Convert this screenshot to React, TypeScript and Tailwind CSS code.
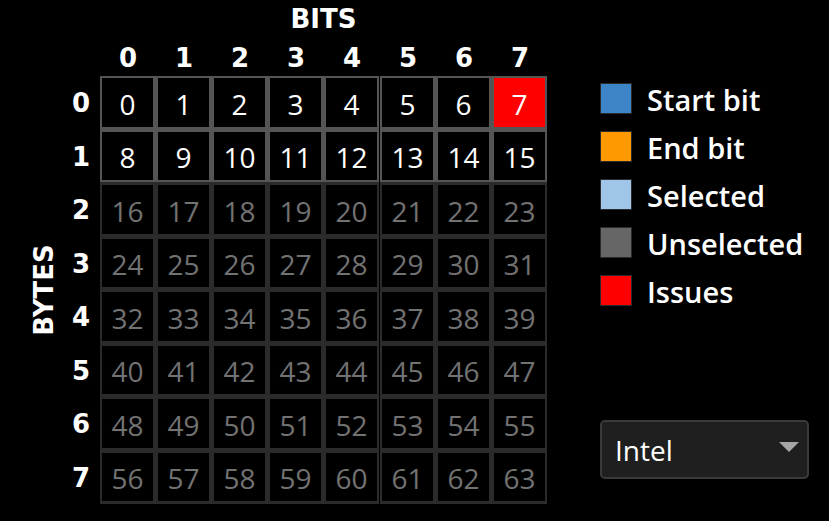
import React from 'react';

const BITS = [0, 1, 2, 3, 4, 5, 6, 7];
const BYTES = [0, 1, 2, 3, 4, 5, 6, 7];

// bytes 0 and 1 hold the signal, bit 7 has an issue
const ACTIVE_BYTES = [0, 1];
const ISSUES = [7];

const LEGEND = [
  { label: 'Start bit', swatch: 'bg-[#3d85c6]' },
  { label: 'End bit', swatch: 'bg-[#ff9900]' },
  { label: 'Selected', swatch: 'bg-[#9fc5e8]' },
  { label: 'Unselected', swatch: 'bg-[#666666]' },
  { label: 'Issues', swatch: 'bg-[#ff0000]' },
];

function Cell({ n, active }: { n: number; active: boolean }) {
  const issue = ISSUES.includes(n);
  return (
    <div
      className={`w-[55px] h-[52.5px] border-2 flex items-center justify-center pt-[3px] text-[28px] leading-none ${
        active ? 'border-[#555555] text-white' : 'border-[#2b2b2b] text-[#727272]'
      } ${issue ? 'bg-[#ff0000]' : 'bg-black'}`}
    >
      {n}
    </div>
  );
}

// one block of columns (the grid is split between bit 4 and bit 5)
function Group({ cols }: { cols: number[] }) {
  const row = (b: number) => (
    <div key={b} className="flex gap-px">
      {cols.map((c) => (
        <Cell key={c} n={b * 8 + c} active={ACTIVE_BYTES.includes(b)} />
      ))}
    </div>
  );
  return (
    <div className="flex flex-col gap-px bg-[#2b2b2b]">
      <div className="flex flex-col gap-px bg-[#555555]">{BYTES.filter((b) => ACTIVE_BYTES.includes(b)).map(row)}</div>
      {BYTES.filter((b) => !ACTIVE_BYTES.includes(b)).map(row)}
    </div>
  );
}

export default function App() {
  const head = "font-['DejaVu_Sans',sans-serif] font-bold text-white text-[26px] leading-none";
  return (
    <div className="w-[829px] h-[521px] bg-black flex font-['Open_Sans',sans-serif] text-white overflow-hidden">
      {/* LEFT — bit matrix */}
      <div className="flex flex-col">
        <div className={`h-[38px] ml-[100px] w-[447px] flex items-center justify-center ${head}`}>BITS</div>
        <div className={`h-[38px] ml-[100px] flex items-center ${head}`}>
          {BITS.map((b) => (
            <div key={b} className="w-[56px] text-center pt-[1px]">{b}</div>
          ))}
        </div>
        <div className="flex">
          <div className="w-[62px] pl-[26px] flex items-center justify-center">
            <div className={`-rotate-90 whitespace-nowrap ${head}`}>BYTES</div>
          </div>
          <div className={`w-[38px] flex flex-col ${head}`}>
            {BYTES.map((b) => (
              <div key={b} className="h-[53.5px] flex items-center justify-center pt-[1px]">{b}</div>
            ))}
          </div>
          <div className="flex gap-px">
            <Group cols={[0, 1, 2, 3, 4]} />
            <Group cols={[5, 6, 7]} />
          </div>
        </div>
      </div>

      {/* RIGHT — legend + byte order */}
      <div className="flex flex-col pl-[52px] pt-[83px] pb-[42px]">
        <div className="flex flex-col gap-[17px]">
          {LEGEND.map((l) => (
            <div key={l.label} className="flex items-center h-[31px]">
              <div className={`w-[32px] h-[31px] border border-[#2a2a2a] ${l.swatch}`} />
              <span className="ml-[15px] text-[29px] font-semibold leading-none pt-[2px]">{l.label}</span>
            </div>
          ))}
        </div>
        <div className="mt-auto w-[209px] h-[59px] rounded-[5px] border-2 border-[#3a3a3a] bg-[#1f1f1f] flex items-center pl-[13px] pr-[8px]">
          <span className="text-[28px] leading-none flex-1">Intel</span>
          <svg width="20" height="10" viewBox="0 0 20 10" className="mb-[6px]">
            <polygon points="0,0 20,0 10,10" fill="#a6a6a6" />
          </svg>
        </div>
      </div>
    </div>
  );
}
